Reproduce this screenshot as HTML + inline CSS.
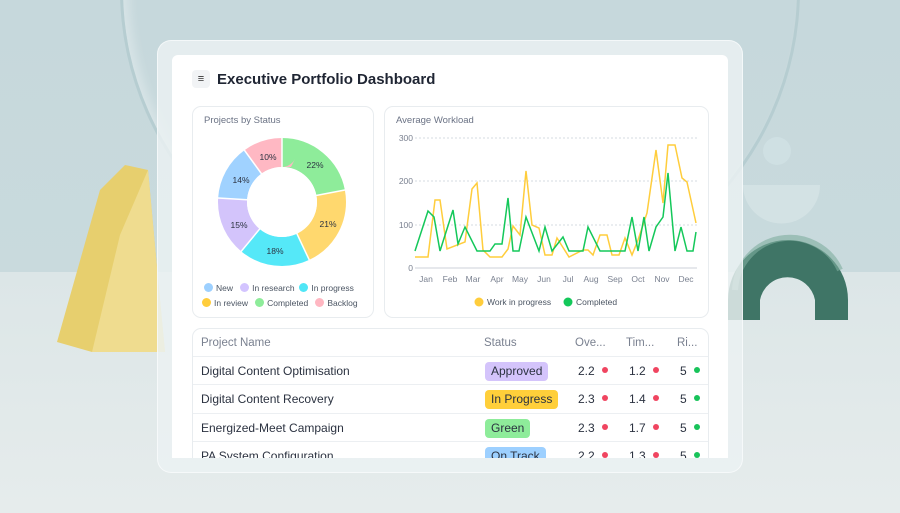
<!DOCTYPE html>
<html><head><meta charset="utf-8"><style>
*{margin:0;padding:0;box-sizing:border-box}
body{width:900px;height:513px;overflow:hidden;position:relative;font-family:"Liberation Sans",sans-serif;background:#dfe7e8}
.abs{position:absolute}
.card{position:absolute;background:#fff;border:1px solid #e8ecef;border-radius:9px}
.t{position:absolute;white-space:nowrap}
.lg{font-size:8.5px;color:#4b5563}
.dot{display:inline-block;width:9px;height:9px;border-radius:50%;vertical-align:-1px;margin-right:3px}
.row{position:absolute;left:0;width:516px;height:28px;border-top:1px solid #eceff2;font-size:12px;color:#2b3240}
.badge{position:absolute;left:292px;top:5px;height:19px;line-height:19px;padding:0 6px;border-radius:4px;font-size:12px;color:#2b3240}
.n{position:absolute;top:7px}
.rd{position:absolute;top:10px;width:6px;height:6px;border-radius:50%;background:#f04560}
.gd{position:absolute;top:10px;width:6px;height:6px;border-radius:50%;background:#18c35a}
</style></head><body>
<div class="abs" style="left:0;top:0;width:900px;height:272px;background:linear-gradient(#c6d8dc,#c9dadd)"></div>
<div class="abs" style="left:0;top:272px;width:900px;height:241px;background:linear-gradient(#dce6e7,#e6ecec)"></div>
<div class="abs" style="left:120px;top:-330px;width:680px;height:640px;border-radius:50%;border:3px solid #b6cdd1;box-shadow:inset 6px 0 10px rgba(255,255,255,.3)"></div>
<svg class="abs" style="left:0;top:0" width="900" height="513">
<polygon points="57,342 100,190 125,165 148,170 160,300 165,352 92,352" fill="#e7cf6e"/>
<polygon points="92,352 120,235 148,170 160,300 165,352" fill="#efdc8f"/>
<circle cx="777" cy="151" r="14" fill="#cfe0e3"/>
<path d="M743,185 H820 A38,38 0 0 1 743,185Z" fill="#d3e2e4"/>
<path d="M728,300 A60,60 0 0 1 848,300 L848,320 L815,320 L815,300 A28,28 0 0 0 760,300 L760,320 L728,320Z" fill="#3f7566"/>
<path d="M735,290 A55,55 0 0 1 840,270" stroke="#7fae9f" stroke-width="6" fill="none" opacity=".6"/>
</svg>
<div class="abs" style="left:157px;top:40px;width:586px;height:433px;border-radius:14px;background:rgba(236,242,243,.82);border:1px solid rgba(255,255,255,.6)"></div>
<div class="abs" style="left:172px;top:55px;width:556px;height:403px;background:#fff;border-radius:6px 6px 0 0;overflow:hidden">
 <div class="abs" style="left:20px;top:15px;width:18px;height:18px;background:#f1f3f5;border-radius:4px;font-size:11px;text-align:center;line-height:18px;color:#333">≡</div>
 <div class="t" style="left:45px;top:16px;font-size:15px;font-weight:bold;color:#1f2533">Executive Portfolio Dashboard</div>
 <div class="card" style="left:20px;top:51px;width:182px;height:212px">
  <div class="t" style="left:11px;top:8px;font-size:9.5px;color:#6b7385">Projects by Status</div>
  <div class="t lg" style="left:11px;top:176px"><span class="dot" style="background:#9dd0ff"></span>New &nbsp;&nbsp;<span class="dot" style="background:#d3c4ff"></span>In research &nbsp;<span class="dot" style="background:#50e6f6"></span>In progress</div>
  <div class="t lg" style="left:9px;top:191px"><span class="dot" style="background:#ffcd3c"></span>In review &nbsp;&nbsp;<span class="dot" style="background:#8eec9a"></span>Completed &nbsp;&nbsp;<span class="dot" style="background:#ffb7c2"></span>Backlog</div>
 </div>
 <div class="card" style="left:212px;top:51px;width:325px;height:212px"></div>
 <div class="card" style="left:20px;top:273px;width:517px;height:160px;overflow:hidden">
  <div class="t" style="left:8px;top:8px;font-size:11.5px;color:#7a8190">Project Name</div>
  <div class="t" style="left:291px;top:8px;font-size:11.5px;color:#7a8190">Status</div>
  <div class="t" style="left:382px;top:8px;font-size:11.5px;color:#7a8190">Ove...</div>
  <div class="t" style="left:433px;top:8px;font-size:11.5px;color:#7a8190">Tim...</div>
  <div class="t" style="left:484px;top:8px;font-size:11.5px;color:#7a8190">Ri...</div>
  <div class="row" style="top:27px"><span class="n" style="left:8px">Digital Content Optimisation</span><span class="badge" style="background:#d4c4fb">Approved</span><span class="n" style="left:385px">2.2</span><span class="rd" style="left:409px"></span><span class="n" style="left:436px">1.2</span><span class="rd" style="left:460px"></span><span class="n" style="left:487px">5</span><span class="gd" style="left:501px"></span></div>
  <div class="row" style="top:55px"><span class="n" style="left:8px">Digital Content Recovery</span><span class="badge" style="background:#ffcf3a">In Progress</span><span class="n" style="left:385px">2.3</span><span class="rd" style="left:409px"></span><span class="n" style="left:436px">1.4</span><span class="rd" style="left:460px"></span><span class="n" style="left:487px">5</span><span class="gd" style="left:501px"></span></div>
  <div class="row" style="top:84px"><span class="n" style="left:8px">Energized-Meet Campaign</span><span class="badge" style="background:#8eec9a">Green</span><span class="n" style="left:385px">2.3</span><span class="rd" style="left:409px"></span><span class="n" style="left:436px">1.7</span><span class="rd" style="left:460px"></span><span class="n" style="left:487px">5</span><span class="gd" style="left:501px"></span></div>
  <div class="row" style="top:112px"><span class="n" style="left:8px">PA System Configuration</span><span class="badge" style="background:#9dd0ff">On Track</span><span class="n" style="left:385px">2.2</span><span class="rd" style="left:409px"></span><span class="n" style="left:436px">1.3</span><span class="rd" style="left:460px"></span><span class="n" style="left:487px">5</span><span class="gd" style="left:501px"></span></div>
 </div>
</div>
<svg class="abs" style="left:0;top:0" width="900" height="513" font-family="Liberation Sans, sans-serif">
 <g transform="rotate(-90 282 202)" fill="none" stroke-width="29">
  <circle cx="282" cy="202" r="49.5" pathLength="100" stroke="#8eec9a" stroke-dasharray="22 78" stroke-dashoffset="0"/>
  <circle cx="282" cy="202" r="49.5" pathLength="100" stroke="#ffd86e" stroke-dasharray="21 79" stroke-dashoffset="-22"/>
  <circle cx="282" cy="202" r="49.5" pathLength="100" stroke="#55e8f8" stroke-dasharray="18 82" stroke-dashoffset="-43"/>
  <circle cx="282" cy="202" r="49.5" pathLength="100" stroke="#d3c4fb" stroke-dasharray="15 85" stroke-dashoffset="-61"/>
  <circle cx="282" cy="202" r="49.5" pathLength="100" stroke="#a0d2ff" stroke-dasharray="14 86" stroke-dashoffset="-76"/>
  <circle cx="282" cy="202" r="49.5" pathLength="100" stroke="#ffb8c3" stroke-dasharray="10 90" stroke-dashoffset="-90"/>
 </g>
 <g stroke="#fff" stroke-width="1.5">
  <line x1="282" y1="202" x2="282" y2="136" transform="rotate(0 282 202)"/>
  <line x1="282" y1="202" x2="282" y2="136" transform="rotate(79.2 282 202)"/>
  <line x1="282" y1="202" x2="282" y2="136" transform="rotate(154.8 282 202)"/>
  <line x1="282" y1="202" x2="282" y2="136" transform="rotate(219.6 282 202)"/>
  <line x1="282" y1="202" x2="282" y2="136" transform="rotate(273.6 282 202)"/>
  <line x1="282" y1="202" x2="282" y2="136" transform="rotate(324 282 202)"/>
 </g>
 <circle cx="282" cy="202" r="35" fill="#fff"/>
 <g font-size="8.5" fill="#2b3240" text-anchor="middle">
  <text x="315" y="168">22%</text><text x="328" y="227">21%</text><text x="275" y="254">18%</text><text x="239" y="228">15%</text><text x="241" y="183">14%</text><text x="268" y="160">10%</text>
 </g>
 <text x="396" y="123" font-size="9.5" fill="#6b7385">Average Workload</text>
 <g stroke="#d6dbe1" stroke-dasharray="2 2" stroke-width="1"><line x1="415" y1="138" x2="697" y2="138"/><line x1="415" y1="181" x2="697" y2="181"/><line x1="415" y1="225" x2="697" y2="225"/></g>
 <line x1="415" y1="268" x2="697" y2="268" stroke="#dde1e6" stroke-width="1.5"/>
 <g font-size="8.5" fill="#7a8190" text-anchor="end"><text x="413" y="141">300</text><text x="413" y="184">200</text><text x="413" y="228">100</text><text x="413" y="271">0</text></g>
 <g font-size="8.5" fill="#7a8190" text-anchor="middle"><text x="426" y="282">Jan</text><text x="450" y="282">Feb</text><text x="473" y="282">Mar</text><text x="497" y="282">Apr</text><text x="520" y="282">May</text><text x="544" y="282">Jun</text><text x="568" y="282">Jul</text><text x="591" y="282">Aug</text><text x="615" y="282">Sep</text><text x="638" y="282">Oct</text><text x="662" y="282">Nov</text><text x="686" y="282">Dec</text></g>
 <polyline fill="none" stroke="#ffcd3c" stroke-width="1.5" points="415,257 428,257 435,200 440,200 447,249 465,242 472,189 477,183 483,250 490,257 502,257 508,249 513,226 520,235 526,171 532,225 539,228 545,255 552,255 557,238 569,257 583,250 588,250 593,255 600,235 607,235 612,255 619,255 625,238 632,255 638,240 647,213 656,150 663,203 668,145 675,145 682,178 687,182 696,223"/>
 <polyline fill="none" stroke="#14c85a" stroke-width="1.5" points="415,251 428,211 434,217 440,251 453,210 458,244 465,227 477,251 490,251 495,244 502,244 508,198 513,251 519,251 526,217 539,251 545,227 552,251 563,237 569,251 583,251 588,227 600,251 625,251 632,217 638,251 644,217 649,251 656,227 663,217 668,173 675,251 681,227 687,251 693,251 696,232"/>
 <circle cx="479" cy="302" r="4.5" fill="#ffcd3c"/><text x="487" y="305" font-size="8.5" fill="#4b5563">Work in progress</text>
 <circle cx="568" cy="302" r="4.5" fill="#14c85a"/><text x="576" y="305" font-size="8.5" fill="#4b5563">Completed</text>
</svg>
</body></html>
